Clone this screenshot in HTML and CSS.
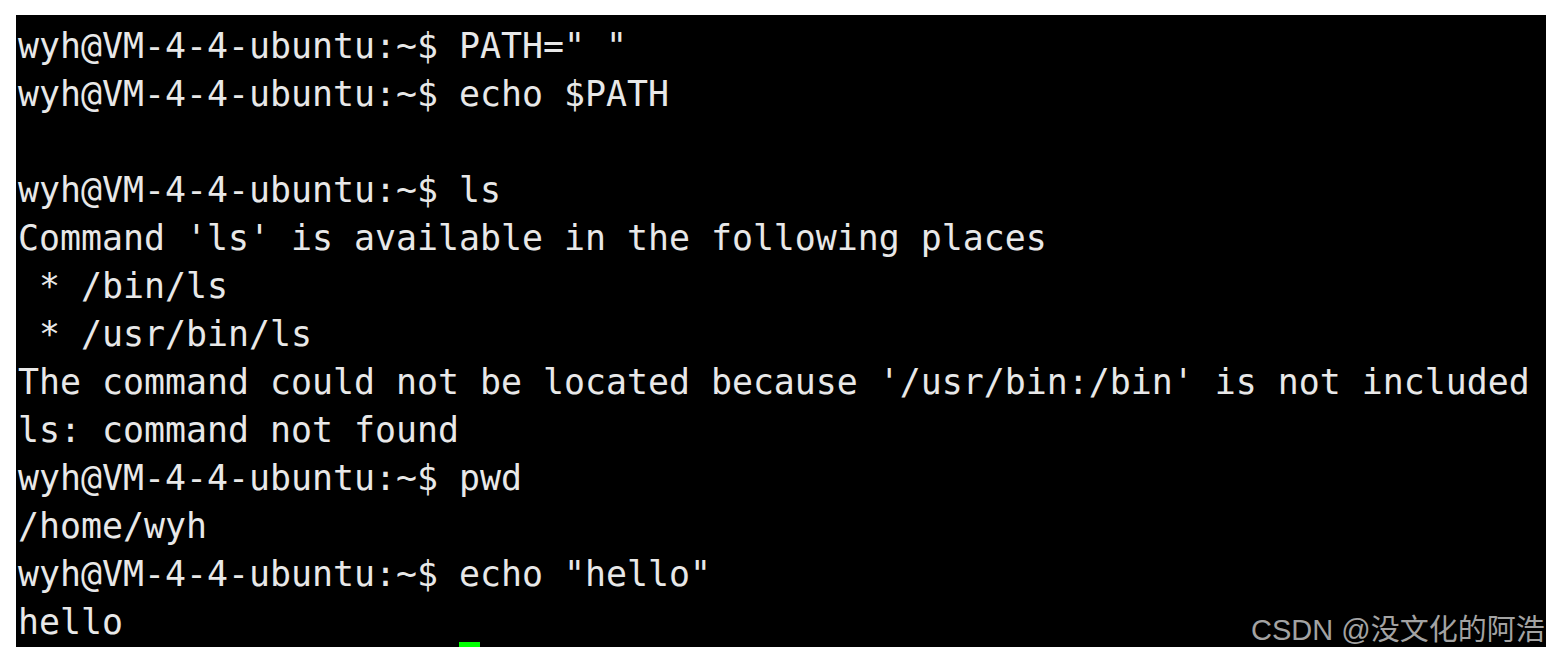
FILE: index.html
```html
<!DOCTYPE html>
<html>
<head>
<meta charset="utf-8">
<link rel="stylesheet" href="styles.css">
</head>
<body>
<div class="term">
<div class="line">wyh@VM-4-4-ubuntu:~$ PATH=" "</div>
<div class="line">wyh@VM-4-4-ubuntu:~$ echo $PATH</div>
<div class="line"> </div>
<div class="line">wyh@VM-4-4-ubuntu:~$ ls</div>
<div class="line">Command 'ls' is available in the following places</div>
<div class="line"> * /bin/ls</div>
<div class="line"> * /usr/bin/ls</div>
<div class="line">The command could not be located because '/usr/bin:/bin' is not included</div>
<div class="line">ls: command not found</div>
<div class="line">wyh@VM-4-4-ubuntu:~$ pwd</div>
<div class="line">/home/wyh</div>
<div class="line">wyh@VM-4-4-ubuntu:~$ echo "hello"</div>
<div class="line">hello</div>
<div class="cursor-line"><span class="cursor"></span></div>
<div class="watermark">CSDN @没文化的阿浩</div>
</div>
</body>
</html>
```
FILE: styles.css
```css
html, body {
  margin: 0;
  padding: 0;
  background: #ffffff;
}
.term {
  position: relative;
  box-sizing: border-box;
  margin: 15px 0 0 16px;
  width: 1530px;
  height: 632px;
  padding: 7px 0 0 2px;
  background: #000000;
  overflow: hidden;
  color: #e8e8e8;
  font-family: "DejaVu Sans Mono", monospace;
  font-size: 34.88px;
}
.line {
  height: 48px;
  line-height: 48px;
  white-space: pre;
}
.cursor-line {
  margin-top: -4px;
}
.cursor {
  display: block;
  margin-left: 441px;
  width: 21px;
  height: 40px;
  background: #00ff00;
}
.watermark {
  position: absolute;
  left: 1235px;
  top: 598px;
  line-height: 34px;
  font-family: "Liberation Sans", "Noto Sans CJK SC", sans-serif;
  font-size: 29px;
  color: #a3a3a3;
  white-space: nowrap;
}
```
